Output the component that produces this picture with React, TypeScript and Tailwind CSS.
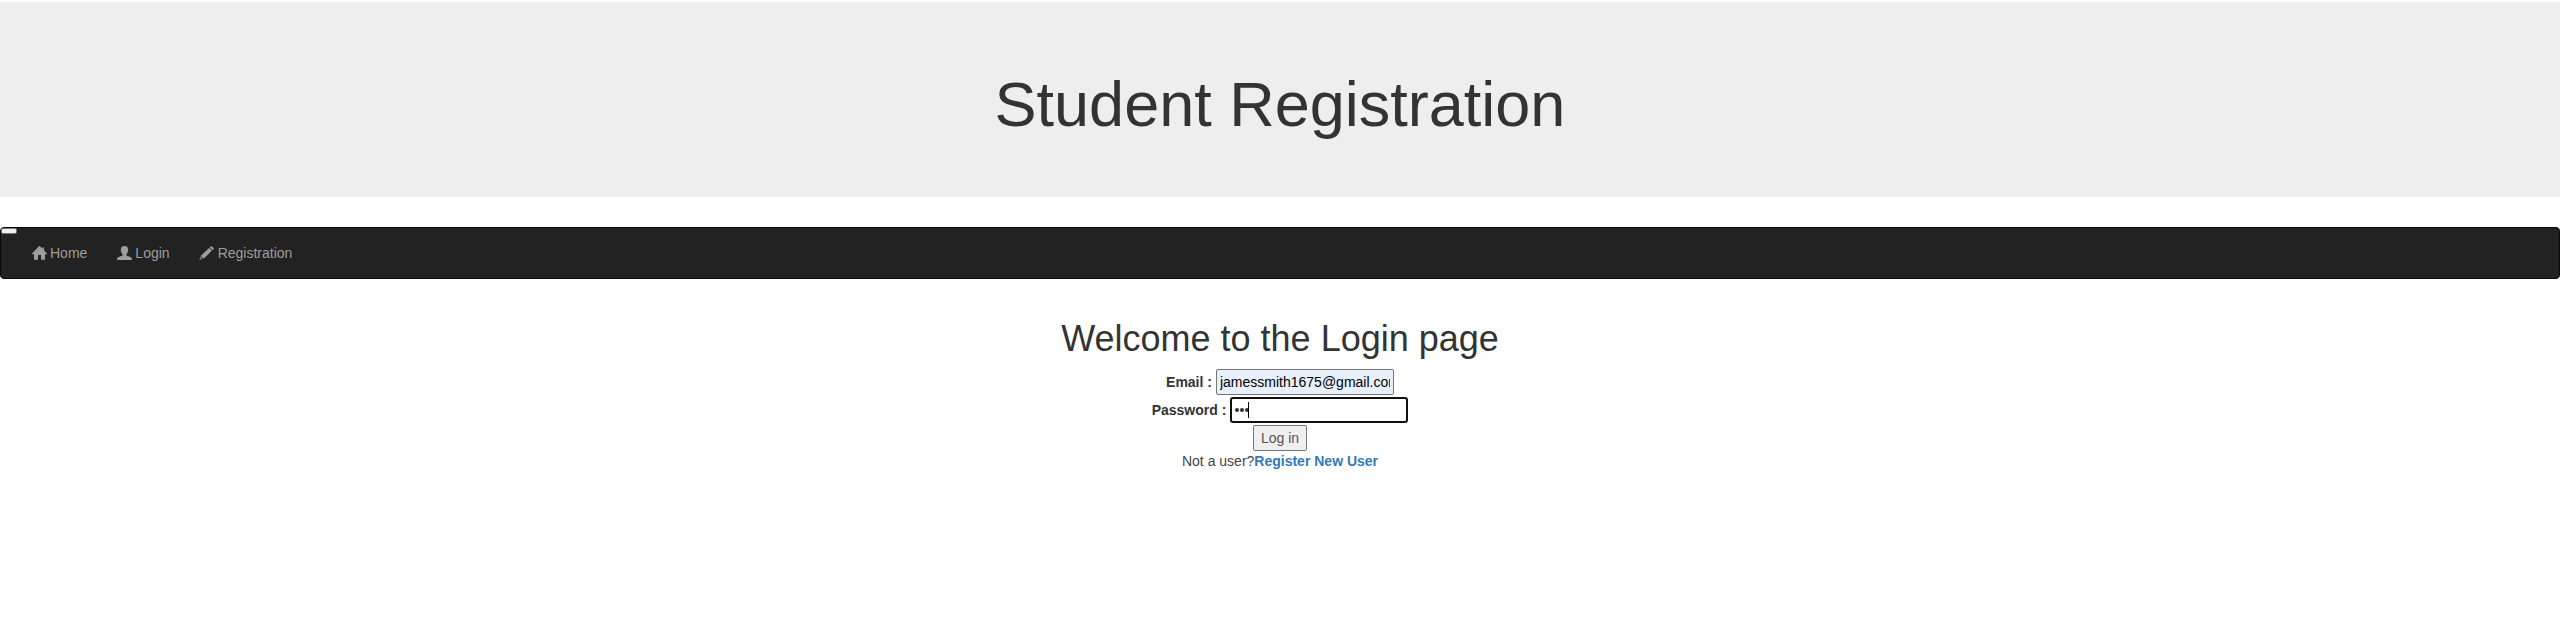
import type { ReactNode } from 'react';

function HomeIcon() {
  return (
    <svg viewBox="0 0 15 14" className="h-[14px] w-[15px]" fill="currentColor">
      <path d="M6.9 0.3 Q7.5 -0.2 8.1 0.3 L10.6 2.8 V1.6 H12 V4.3 L15 7.5 V8.2 H13 V13.8 H9 V9 H6 V13.8 H2 V8.2 H0 V7.5 Z" />
    </svg>
  );
}

function UserIcon() {
  return (
    <svg viewBox="0 0 15 14" className="h-[14px] w-[15px]" fill="currentColor">
      <path d="M7.5 0 C5.2 0 4 1.2 4 3.3 C3.6 3.9 3.6 4.7 4 5.2 C4.3 6.6 4.9 7.5 5.5 8 V9.5 C4.7 10.2 2.6 10.5 1.1 11.3 C0.3 11.8 0 12.6 0 13.9 H15 C15 12.6 14.7 11.8 13.9 11.3 C12.4 10.5 10.3 10.2 9.5 9.5 V8 C10.1 7.5 10.7 6.6 11 5.2 C11.4 4.7 11.4 3.9 11 3.3 C11 1.2 9.8 0 7.5 0 Z" />
    </svg>
  );
}

function PencilIcon() {
  return (
    <svg viewBox="0 0 15 14" className="-ml-px mr-px h-[14px] w-[15px]" fill="currentColor">
      <path d="M11.6 0.5 C12 0.1 12.6 0.1 13 0.5 L14.4 1.8 C14.9 2.2 14.9 2.8 14.5 3.2 L13.5 4.2 L10.7 1.4 Z" />
      <path
        d="M10.1 2 L12.9 4.8 L5.3 12.1 L0.2 13.9 L2.4 9.3 Z M2.6 10.8 L1.9 12.1 L2.5 12.7 L4 12 Z"
        fillRule="evenodd"
      />
    </svg>
  );
}

function NavLink({ icon, label }: { icon: ReactNode; label: string }) {
  return (
    <a href="#" className="flex items-center gap-[3px] px-[15px] leading-5 text-[#9d9d9d]">
      {icon}
      <span>{label}</span>
    </a>
  );
}

export default function App() {
  return (
    <div className="min-h-[631px] bg-white pt-[2px] font-['Liberation_Sans',Arial,sans-serif] text-[14px] leading-5 text-[#333]">
      <header className="mb-[30px] h-[195px] bg-[#eee] pt-[68px] text-center">
        <h1 className="text-[63px] leading-[69.3px] font-medium">Student Registration</h1>
      </header>

      <nav className="mb-5 flex h-[52px] items-start rounded-[4px] border border-[#080808] bg-[#222]">
        <button
          type="button"
          aria-label="Toggle navigation"
          className="-mr-4 h-[6px] w-4 rounded-[2px] border border-[#767676] bg-[#efefef]"
        />
        <div className="flex h-[50px] items-center pl-4">
          <NavLink icon={<HomeIcon />} label="Home" />
          <NavLink icon={<UserIcon />} label="Login" />
          <NavLink icon={<PencilIcon />} label="Registration" />
        </div>
      </nav>

      <main className="flex flex-col items-center pt-5">
        <h2 className="mb-[10px] h-10 text-[36px] leading-[39.6px] font-medium">
          Welcome to the Login page
        </h2>
        <div className="mb-[2px] flex h-[26px] items-center gap-1">
          <label htmlFor="email" className="font-bold">Email :</label>
          <input
            id="email"
            type="text"
            defaultValue="jamessmith1675@gmail.com"
            className="h-[26px] w-[178px] rounded-[2px] border border-[#767676] bg-[#e8f0fe] px-[3px] text-black outline-none"
          />
        </div>
        <div className="mb-[2px] flex h-[26px] items-center gap-1">
          <label htmlFor="password" className="font-bold">Password :</label>
          <div
            id="password"
            className="flex h-[26px] w-[178px] items-center rounded-[3px] border-2 border-[#101010] bg-white pl-[3px]"
          >
            <div className="flex gap-[1px]">
              <span className="size-1 rounded-full bg-[#333]" />
              <span className="size-1 rounded-full bg-[#333]" />
              <span className="size-1 rounded-full bg-[#333]" />
            </div>
            <span className="-ml-px h-4 w-px bg-black" />
          </div>
        </div>
        <button
          type="button"
          className="h-[26px] w-[54px] rounded-[2px] border border-[#767676] bg-[#efefef] text-[#555]"
        >
          Log in
        </button>
        <p className="text-[#444]">
          Not a user?
          <a href="#" className="font-bold text-[#337ab7]">Register New User</a>
        </p>
      </main>
    </div>
  );
}
